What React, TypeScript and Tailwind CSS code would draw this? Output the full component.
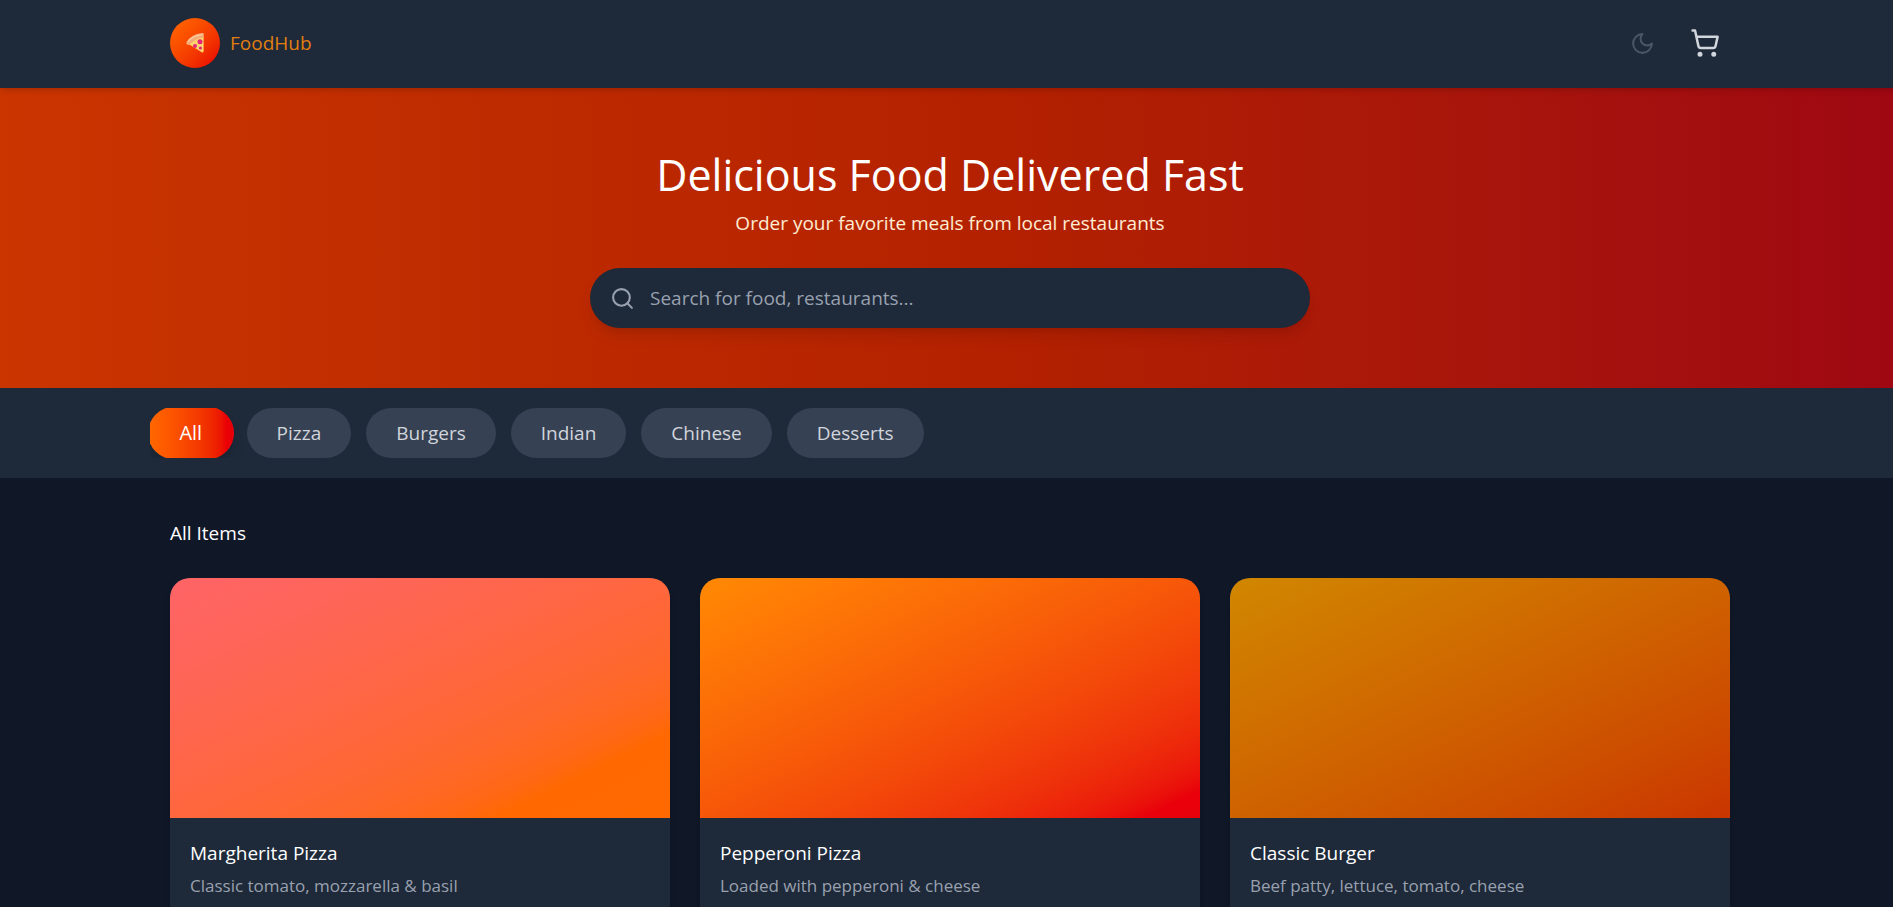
import { useState } from "react";

const categories = ["All", "Pizza", "Burgers", "Indian", "Chinese", "Desserts"];

const items = [
  { name: "Margherita Pizza", text: "Classic tomato, mozzarella & basil", tone: "from-red-400 to-orange-500" },
  { name: "Pepperoni Pizza", text: "Loaded with pepperoni & cheese", tone: "from-orange-400 to-red-600" },
  { name: "Classic Burger", text: "Beef patty, lettuce, tomato, cheese", tone: "from-yellow-600 to-orange-700" },
];

function PizzaSlice() {
  return (
    <svg viewBox="0 0 18 20" className="h-5 w-[18px]" aria-hidden="true">
      <path d="M2.6 11 Q8 5 17.6 3.6 V18.6 Q17.4 19.8 15.8 19.2Z" fill="#ffd56b" />
      <path d="M0.2 9.8 Q4.6 1.4 16.4 0.1 Q17.8 0 17.8 1.4 V4.4 Q9 5.2 3.8 11.8 Q0 12.4 0.2 9.8Z" fill="#f3ab78" />
      <path d="M1.6 8.9 Q6.4 2.8 16.6 1.4" stroke="#fbcb9c" strokeWidth="1.2" fill="none" />
      <circle cx="14" cy="8.7" r="2.5" fill="#e3247a" />
      <circle cx="9" cy="13" r="2" fill="#e3247a" />
      <circle cx="14.4" cy="15" r="1.6" fill="#e3247a" />
    </svg>
  );
}

function Cart() {
  return (
    <svg viewBox="0 0 24 24" className="size-[30px]" fill="none" stroke="currentColor" strokeWidth="2" strokeLinecap="round" strokeLinejoin="round" aria-hidden="true">
      <path d="M2.05 2.05h2l2.66 12.42a2 2 0 0 0 2 1.58h9.78a2 2 0 0 0 1.95-1.57l1.65-7.43H5.12" />
      <circle cx="8" cy="21" r="1" />
      <circle cx="19" cy="21" r="1" />
    </svg>
  );
}

function Moon() {
  return (
    <svg viewBox="0 0 24 24" className="size-[25px]" fill="none" stroke="currentColor" strokeWidth="2" strokeLinecap="round" strokeLinejoin="round" aria-hidden="true">
      <path d="M12 3a6 6 0 0 0 9 9 9 9 0 1 1-9-9Z" />
    </svg>
  );
}

export default function App() {
  const [active, setActive] = useState("All");
  return (
    <div className="h-screen overflow-hidden bg-gray-900 font-['Segoe_UI','Open_Sans','Noto_Sans',sans-serif] text-[19px] leading-[30px]">
      <div className="w-[calc(100%+7px)]">
        <header className="relative z-10 bg-gray-800 shadow-md">
          <div className="mx-auto flex max-w-[1600px] items-center justify-between px-5 pt-[18px] pb-5">
            <a href="#" className="flex items-center gap-2.5">
              <span className="flex size-[50px] items-center justify-center rounded-full bg-linear-to-br from-orange-500 to-red-600">
                <PizzaSlice />
              </span>
              <span className="text-[#e17e10]">FoodHub</span>
            </a>
            <div className="flex items-center gap-[15px]">
              <button type="button" aria-label="Toggle dark mode" className="p-2.5 text-gray-600">
                <Moon />
              </button>
              <button type="button" aria-label="Cart" className="p-2.5 text-gray-300">
                <Cart />
              </button>
            </div>
          </div>
        </header>

        <section className="bg-linear-to-r from-orange-700 to-red-800 px-5 pt-[62px] pb-[60px] text-center">
          <h1 className="mb-2 text-[43px] leading-[50px] text-white">Delicious Food Delivered Fast</h1>
          <p className="mb-[30px] text-orange-100">Order your favorite meals from local restaurants</p>
          <label className="mx-auto flex h-[60px] max-w-[720px] items-center gap-[15px] rounded-full bg-gray-800 px-5 shadow-lg">
            <svg viewBox="0 0 24 24" className="size-[25px] shrink-0 text-gray-400" fill="none" stroke="currentColor" strokeWidth="2" strokeLinecap="round" strokeLinejoin="round" aria-hidden="true">
              <circle cx="11" cy="11" r="8" />
              <path d="m21 21-4.34-4.34" />
            </svg>
            <input
              type="text"
              aria-label="Search"
              placeholder="Search for food, restaurants..."
              className="min-w-0 flex-1 bg-transparent text-white outline-none placeholder:text-gray-400"
            />
          </label>
        </section>

        <nav className="bg-gray-800 py-5">
          <div className="mx-auto flex max-w-[1600px] gap-[15px] overflow-hidden">
            {categories.map((name) => (
              <button
                key={name}
                type="button"
                onClick={() => setActive(name)}
                className={
                  name === active
                    ? "scale-105 rounded-full bg-linear-to-r from-orange-500 to-red-600 px-[30px] py-2.5 text-white shadow-lg"
                    : "rounded-full bg-gray-700 px-[30px] py-2.5 text-gray-300"
                }
              >
                {name}
              </button>
            ))}
          </div>
        </nav>

        <main className="mx-auto max-w-[1600px] px-5 py-10">
          <h2 className="mb-[30px] text-white">All Items</h2>
          <div className="grid grid-cols-3 gap-[30px]">
            {items.map((item) => (
              <article key={item.name} className="overflow-hidden rounded-[20px] bg-gray-800 shadow-md">
                <div className={`h-60 bg-linear-to-br ${item.tone}`} />
                <div className="px-5 pt-5 pb-10">
                  <h3 className="mb-[5px] text-white">{item.name}</h3>
                  <p className="text-[17px] leading-[25px] text-gray-400">{item.text}</p>
                </div>
              </article>
            ))}
          </div>
        </main>
      </div>
    </div>
  );
}
